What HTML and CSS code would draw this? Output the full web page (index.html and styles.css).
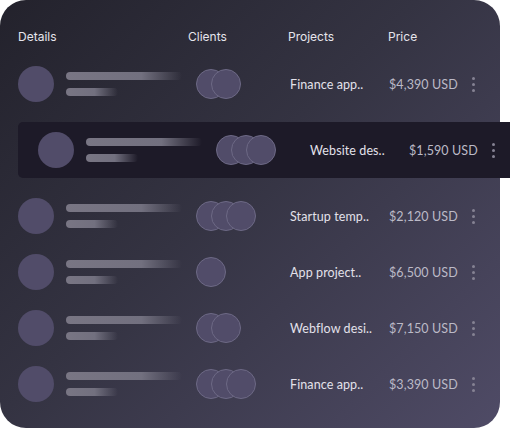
FILE: index.html
```html
<!DOCTYPE html>
<html>
<head>
<meta charset="utf-8">
<link rel="stylesheet" href="styles.css">
</head>
<body>
<div class="card">
  <div class="head">
    <span>Details</span><span>Clients</span><span>Projects</span><span>Price</span>
  </div>
  <div class="rows">
    <div class="row">
      <div class="details"><div class="avatar"></div><div class="bars"><i class="b1"></i><i class="b2"></i></div></div>
      <div class="clients"><b></b><b></b></div>
      <div class="proj">Finance app..</div>
      <div class="price">$4,390 USD</div>
      <div class="dots"><i></i><i></i><i></i></div>
    </div>
    <div class="row active">
      <div class="details"><div class="avatar"></div><div class="bars"><i class="b1"></i><i class="b2"></i></div></div>
      <div class="clients"><b></b><b></b><b></b></div>
      <div class="proj">Website des..</div>
      <div class="price">$1,590 USD</div>
      <div class="dots"><i></i><i></i><i></i></div>
    </div>
    <div class="row">
      <div class="details"><div class="avatar"></div><div class="bars"><i class="b1"></i><i class="b2"></i></div></div>
      <div class="clients"><b></b><b></b><b></b></div>
      <div class="proj">Startup temp..</div>
      <div class="price">$2,120 USD</div>
      <div class="dots"><i></i><i></i><i></i></div>
    </div>
    <div class="row">
      <div class="details"><div class="avatar"></div><div class="bars"><i class="b1"></i><i class="b2"></i></div></div>
      <div class="clients"><b></b></div>
      <div class="proj">App project..</div>
      <div class="price">$6,500 USD</div>
      <div class="dots"><i></i><i></i><i></i></div>
    </div>
    <div class="row">
      <div class="details"><div class="avatar"></div><div class="bars"><i class="b1"></i><i class="b2"></i></div></div>
      <div class="clients"><b></b><b></b></div>
      <div class="proj">Webflow desi..</div>
      <div class="price">$7,150 USD</div>
      <div class="dots"><i></i><i></i><i></i></div>
    </div>
    <div class="row">
      <div class="details"><div class="avatar"></div><div class="bars"><i class="b1"></i><i class="b2"></i></div></div>
      <div class="clients"><b></b><b></b><b></b></div>
      <div class="proj">Finance app..</div>
      <div class="price">$3,390 USD</div>
      <div class="dots"><i></i><i></i><i></i></div>
    </div>
  </div>
</div>
</body>
</html>
```

FILE: styles.css
```css
* { box-sizing: border-box; }
html, body { margin: 0; padding: 0; background: #ffffff; }
body { width: 510px; height: 430px; overflow: hidden; }

.card {
  width: 500px;
  height: 428px;
  border-radius: 26px;
  background: linear-gradient(135deg, #23222c 0%, #343342 45%, #4f4b66 100%);
  padding-top: 29px;
}

.head {
  display: grid;
  grid-template-columns: 170px 100px 100px 100px;
  padding-left: 18px;
  font-family: Inter, "Liberation Sans", sans-serif;
  font-size: 12px;
  line-height: 16px;
  color: #e6e5ec;
}

.rows {
  display: flex;
  flex-direction: column;
  margin-top: 11px;
}

.row {
  display: grid;
  grid-template-columns: 170px 100px 100px 84px 20px;
  align-items: center;
  height: 56px;
  padding-left: 18px;
  font-family: Lato, "Liberation Sans", sans-serif;
  font-size: 12.5px;
  letter-spacing: 0.1px;
}

.row.active {
  margin: 10px -10px 10px 18px;
  padding-left: 20px;
  background: #1d1a28;
  border-radius: 5px 0 0 5px;
}

.details { display: flex; align-items: center; gap: 12px; }
.avatar { width: 36px; height: 36px; border-radius: 50%; background: #514c69; }
.bars { display: flex; flex-direction: column; gap: 8px; }
.bars i { display: block; height: 8px; border-radius: 4px; }
.bars .b1 { width: 116px; background: linear-gradient(90deg, #797684 0%, #72707f 65%, rgba(100,96,120,0) 100%); }
.bars .b2 { width: 52px; background: linear-gradient(90deg, #797684 0%, #72707f 55%, rgba(100,96,120,0) 100%); }

.clients { display: flex; padding-left: 8px; }
.clients b {
  display: block;
  width: 30px; height: 30px;
  border-radius: 50%;
  background: #514c69;
  border: 1px solid #6d6985;
}
.clients b + b { margin-left: -15px; }

.proj { color: #e3e1ea; padding-left: 2px; white-space: nowrap; }
.price { color: #bcbac7; padding-left: 1px; white-space: nowrap; }

.dots { display: flex; flex-direction: column; gap: 3px; }
.dots i { display: block; width: 3px; height: 3px; border-radius: 50%; background: #858293; }
```
